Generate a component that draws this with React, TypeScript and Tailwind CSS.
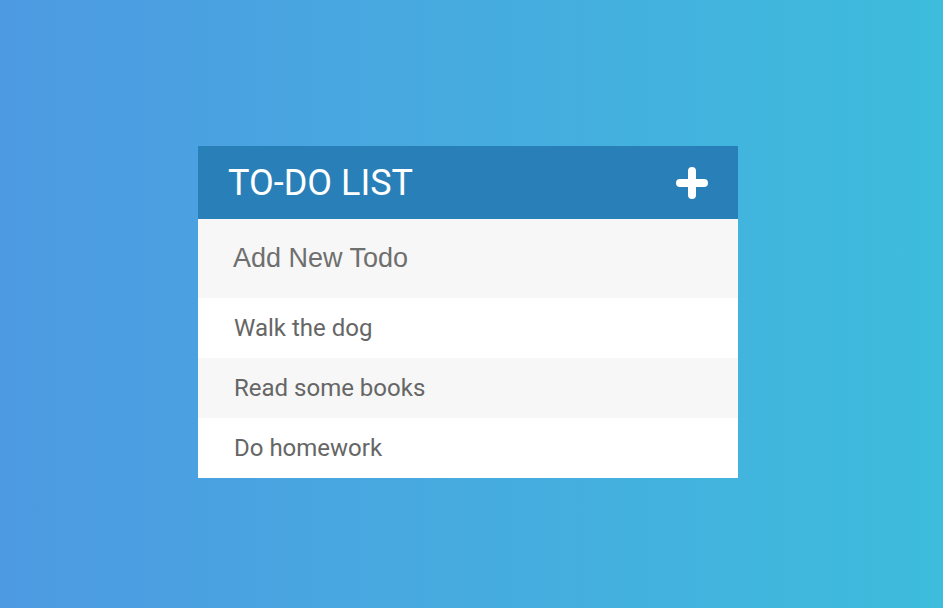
import React from "react";

const todos = ["Walk the dog", "Read some books", "Do homework"];

export default function App() {
  return (
    <div className="w-[943px] h-[608px] bg-gradient-to-r from-[#4d9ae2] to-[#3dbcdc] pt-[146px] pl-[198px] font-['Roboto',sans-serif]">
      <div className="w-[540px] flex flex-col">
        <div className="h-[73px] bg-[#2980b9] flex items-center justify-between pl-[30px] pr-[30px]">
          <h1 className="text-[36px] leading-none text-white font-normal tracking-normal">TO-DO LIST</h1>
          <svg width="32" height="32" viewBox="0 0 32 32" className="block">
            <path d="M16 4 V28 M4 16 H28" stroke="white" strokeWidth="8" strokeLinecap="round" fill="none" />
          </svg>
        </div>
        <div className="h-[79px] bg-[#f7f7f7] flex items-center pl-[35px]">
          <span className="text-[27px] text-[#6f6f6f] font-['Liberation_Sans',Arial,sans-serif]">Add New Todo</span>
        </div>
        <ul>
          {todos.map((t, i) => (
            <li
              key={t}
              className={`h-[60px] flex items-center pl-[36px] text-[24px] text-[#666666] ${i % 2 === 1 ? "bg-[#f7f7f7]" : "bg-white"}`}
            >
              {t}
            </li>
          ))}
        </ul>
      </div>
    </div>
  );
}
